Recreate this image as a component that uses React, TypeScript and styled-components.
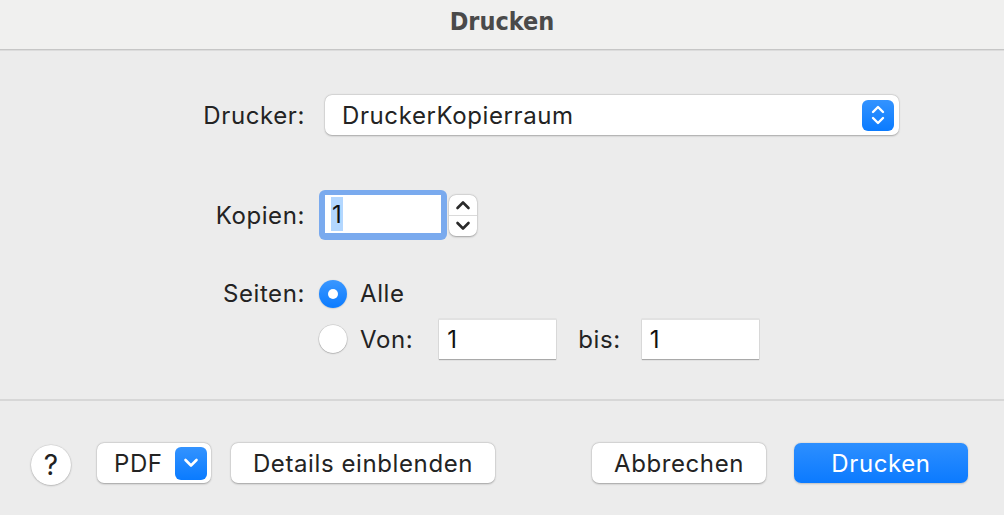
import React from "react";
import styled, { createGlobalStyle } from "styled-components";

const Global = createGlobalStyle`
  html, body { margin: 0; padding: 0; }
  body {
    width: 1004px;
    height: 515px;
    overflow: hidden;
    background: #ececec;
    font-family: Inter, "Noto Sans", "Liberation Sans", sans-serif;
    color: #222;
  }
`;

const Window = styled.div`
  width: 1004px;
  height: 515px;
  display: flex;
  flex-direction: column;
  background: #ececec;
`;

const TitleBar = styled.div`
  height: 50px;
  box-sizing: border-box;
  padding-bottom: 7px;
  background: #f0f0ef;
  border-bottom: 1px solid #c6c6c6;
  box-shadow: 0 1px 0 #dcdcdc;
  display: flex;
  align-items: center;
  justify-content: center;
`;

const Title = styled.h1`
  margin: 0;
  font-family: "DejaVu Sans Condensed", "DejaVu Sans", sans-serif;
  font-stretch: condensed;
  font-weight: 700;
  font-size: 25px;
  color: #4a4a4a;
`;

const Form = styled.div`
  display: grid;
  grid-template-columns: 305px auto;
  column-gap: 14px;
  align-items: center;
  padding-top: 45px;
  height: 306px;
  box-sizing: border-box;
  align-content: start;
`;

const textStyle = `
  font-size: 24px;
  letter-spacing: 0.6px;
  color: #232323;
`;

const Label = styled.div<{ $mt?: number }>`
  justify-self: end;
  ${textStyle}
  margin-top: ${(p) => p.$mt ?? 0}px;
`;

const Cell = styled.div<{ $mt?: number }>`
  display: flex;
  align-items: center;
  margin-top: ${(p) => p.$mt ?? 0}px;
`;

const Popup = styled.div`
  margin-left: 6px;
  width: 574px;
  height: 40px;
  box-sizing: border-box;
  background: #fff;
  border-radius: 7px;
  box-shadow: 0 0.5px 2px rgba(0, 0, 0, 0.28), 0 0 0 0.5px rgba(0, 0, 0, 0.06);
  display: flex;
  align-items: center;
  justify-content: space-between;
  padding: 0 5px 0 17px;
  ${textStyle}
`;

const BlueKnob = styled.div<{ $w: number; $h: number }>`
  width: ${(p) => p.$w}px;
  height: ${(p) => p.$h}px;
  border-radius: 6px;
  background: linear-gradient(#3393ff, #0a7bff);
  display: flex;
  align-items: center;
  justify-content: center;
`;

const FocusRing = styled.div`
  width: 128px;
  height: 50px;
  box-sizing: border-box;
  padding: 5px 6px 7px 6px;
  border-radius: 6px;
  background: #7aaaee;
`;

const Field = styled.div<{ $w: number }>`
  width: ${(p) => p.$w}px;
  height: 100%;
  box-sizing: border-box;
  background: #fff;
  display: flex;
  align-items: center;
  padding-left: 6px;
  ${textStyle}
  color: #111;
`;

const Selected = styled.span`
  background: #b3d7ff;
  display: inline-flex;
  align-items: center;
  height: 34px;
  padding: 0 1px;
`;

const Stepper = styled.div`
  margin-left: 2px;
  width: 28px;
  height: 41px;
  border-radius: 7px;
  background: #fff;
  box-shadow: 0 0.5px 2px rgba(0, 0, 0, 0.3), 0 0 0 0.5px rgba(0, 0, 0, 0.06);
  display: flex;
  flex-direction: column;
  overflow: hidden;
`;

const StepHalf = styled.div<{ $top?: boolean }>`
  flex: 1;
  display: flex;
  align-items: center;
  justify-content: center;
  border-bottom: ${(p) => (p.$top ? "1px solid #dadada" : "none")};
`;

const Radio = styled.div<{ $on?: boolean }>`
  width: 28px;
  height: 28px;
  box-sizing: border-box;
  border-radius: 50%;
  display: flex;
  align-items: center;
  justify-content: center;
  background: ${(p) => (p.$on ? "linear-gradient(#3a97ff, #0b7bff)" : "#fff")};
  box-shadow: ${(p) =>
    p.$on
      ? "0 0.5px 1.5px rgba(0,0,0,0.2)"
      : "0 0.5px 1.5px rgba(0,0,0,0.3), 0 0 0 0.5px rgba(0,0,0,0.12)"};
  &::after {
    content: "";
    display: ${(p) => (p.$on ? "block" : "none")};
    width: 10px;
    height: 10px;
    border-radius: 50%;
    background: #fff;
  }
`;

const OptionText = styled.span<{ $ml?: number; $mr?: number }>`
  ${textStyle}
  margin-left: ${(p) => p.$ml ?? 0}px;
  margin-right: ${(p) => p.$mr ?? 0}px;
`;

const RangeInput = styled.div`
  width: 117px;
  height: 40px;
  box-sizing: border-box;
  background: #fff;
  border-top: 1px solid #e2e2e2;
  box-shadow: 0 1px 1px rgba(0, 0, 0, 0.25), 0 0 0 0.5px rgba(0, 0, 0, 0.08);
  display: flex;
  align-items: center;
  padding-left: 8px;
  ${textStyle}
  color: #111;
`;

const Divider = styled.div`
  height: 2px;
  background: #d7d7d7;
  margin-top: 43px;
`;

const Footer = styled.div`
  flex: 1;
  display: flex;
  align-items: center;
  padding: 10px 36px 0 31px;
`;

const HelpButton = styled.div`
  width: 40px;
  height: 40px;
  border-radius: 50%;
  background: #fff;
  box-shadow: 0 0.5px 2px rgba(0, 0, 0, 0.3), 0 0 0 0.5px rgba(0, 0, 0, 0.06);
  display: flex;
  align-items: center;
  justify-content: center;
  font-size: 28px;
  font-weight: 400;
  color: #222;
  margin-top: 3px;
  margin-right: 26px;
`;

const Button = styled.div<{ $w: number; $primary?: boolean; $mr?: number; $ml?: number }>`
  width: ${(p) => p.$w}px;
  height: 40px;
  box-sizing: border-box;
  border-radius: 7px;
  display: flex;
  align-items: center;
  justify-content: center;
  ${textStyle}
  margin-right: ${(p) => p.$mr ?? 0}px;
  margin-left: ${(p) => p.$ml ?? 0}px;
  color: ${(p) => (p.$primary ? "#fff" : "#232323")};
  background: ${(p) => (p.$primary ? "linear-gradient(#2d8fff, #0b7aff)" : "#fff")};
  box-shadow: ${(p) =>
    p.$primary
      ? "0 0.5px 2px rgba(0,0,0,0.2)"
      : "0 0.5px 2px rgba(0,0,0,0.3), 0 0 0 0.5px rgba(0,0,0,0.06)"};
`;

const PdfButton = styled(Button)`
  justify-content: space-between;
  padding: 0 4px 0 17px;
`;

const Spacer = styled.div`
  flex: 1;
`;

const UpDown = () => (
  <svg width="16" height="22" viewBox="0 0 16 22" fill="none">
    <path d="M3 8 L8 3 L13 8" stroke="#fff" strokeWidth="2.4" strokeLinecap="round" strokeLinejoin="round" />
    <path d="M3 14 L8 19 L13 14" stroke="#fff" strokeWidth="2.4" strokeLinecap="round" strokeLinejoin="round" />
  </svg>
);

const Chevron = ({ up, color = "#2a2a2a" }: { up?: boolean; color?: string }) => (
  <svg width="16" height="10" viewBox="0 0 16 10" fill="none">
    <path
      d={up ? "M2.5 8 L8 2.5 L13.5 8" : "M2.5 2 L8 7.5 L13.5 2"}
      stroke={color}
      strokeWidth="2.6"
      strokeLinecap="round"
      strokeLinejoin="round"
    />
  </svg>
);

export default function App() {
  return (
    <>
      <Global />
      <Window>
        <TitleBar>
          <Title>Drucken</Title>
        </TitleBar>
        <Form>
          <Label>Drucker:</Label>
          <Cell>
            <Popup>
              <span>DruckerKopierraum</span>
              <BlueKnob $w={32} $h={31}>
                <UpDown />
              </BlueKnob>
            </Popup>
          </Cell>

          <Label $mt={55}>Kopien:</Label>
          <Cell $mt={55}>
            <FocusRing>
              <Field $w={116}>
                <Selected>1</Selected>
              </Field>
            </FocusRing>
            <Stepper>
              <StepHalf $top>
                <Chevron up />
              </StepHalf>
              <StepHalf>
                <Chevron />
              </StepHalf>
            </Stepper>
          </Cell>

          <Label $mt={39}>Seiten:</Label>
          <Cell $mt={39}>
            <Radio $on />
            <OptionText $ml={13}>Alle</OptionText>
          </Cell>

          <div />
          <Cell $mt={11}>
            <Radio />
            <OptionText $ml={13} $mr={26}>
              Von:
            </OptionText>
            <RangeInput>1</RangeInput>
            <OptionText $ml={22} $mr={21}>
              bis:
            </OptionText>
            <RangeInput>1</RangeInput>
          </Cell>
        </Form>
        <Divider />
        <Footer>
          <HelpButton>?</HelpButton>
          <PdfButton $w={114} $mr={20}>
            <span>PDF</span>
            <BlueKnob $w={32} $h={33}>
              <Chevron color="#fff" />
            </BlueKnob>
          </PdfButton>
          <Button $w={264}>Details einblenden</Button>
          <Spacer />
          <Button $w={174} $mr={28}>
            Abbrechen
          </Button>
          <Button $w={174} $primary>
            Drucken
          </Button>
        </Footer>
      </Window>
    </>
  );
}
